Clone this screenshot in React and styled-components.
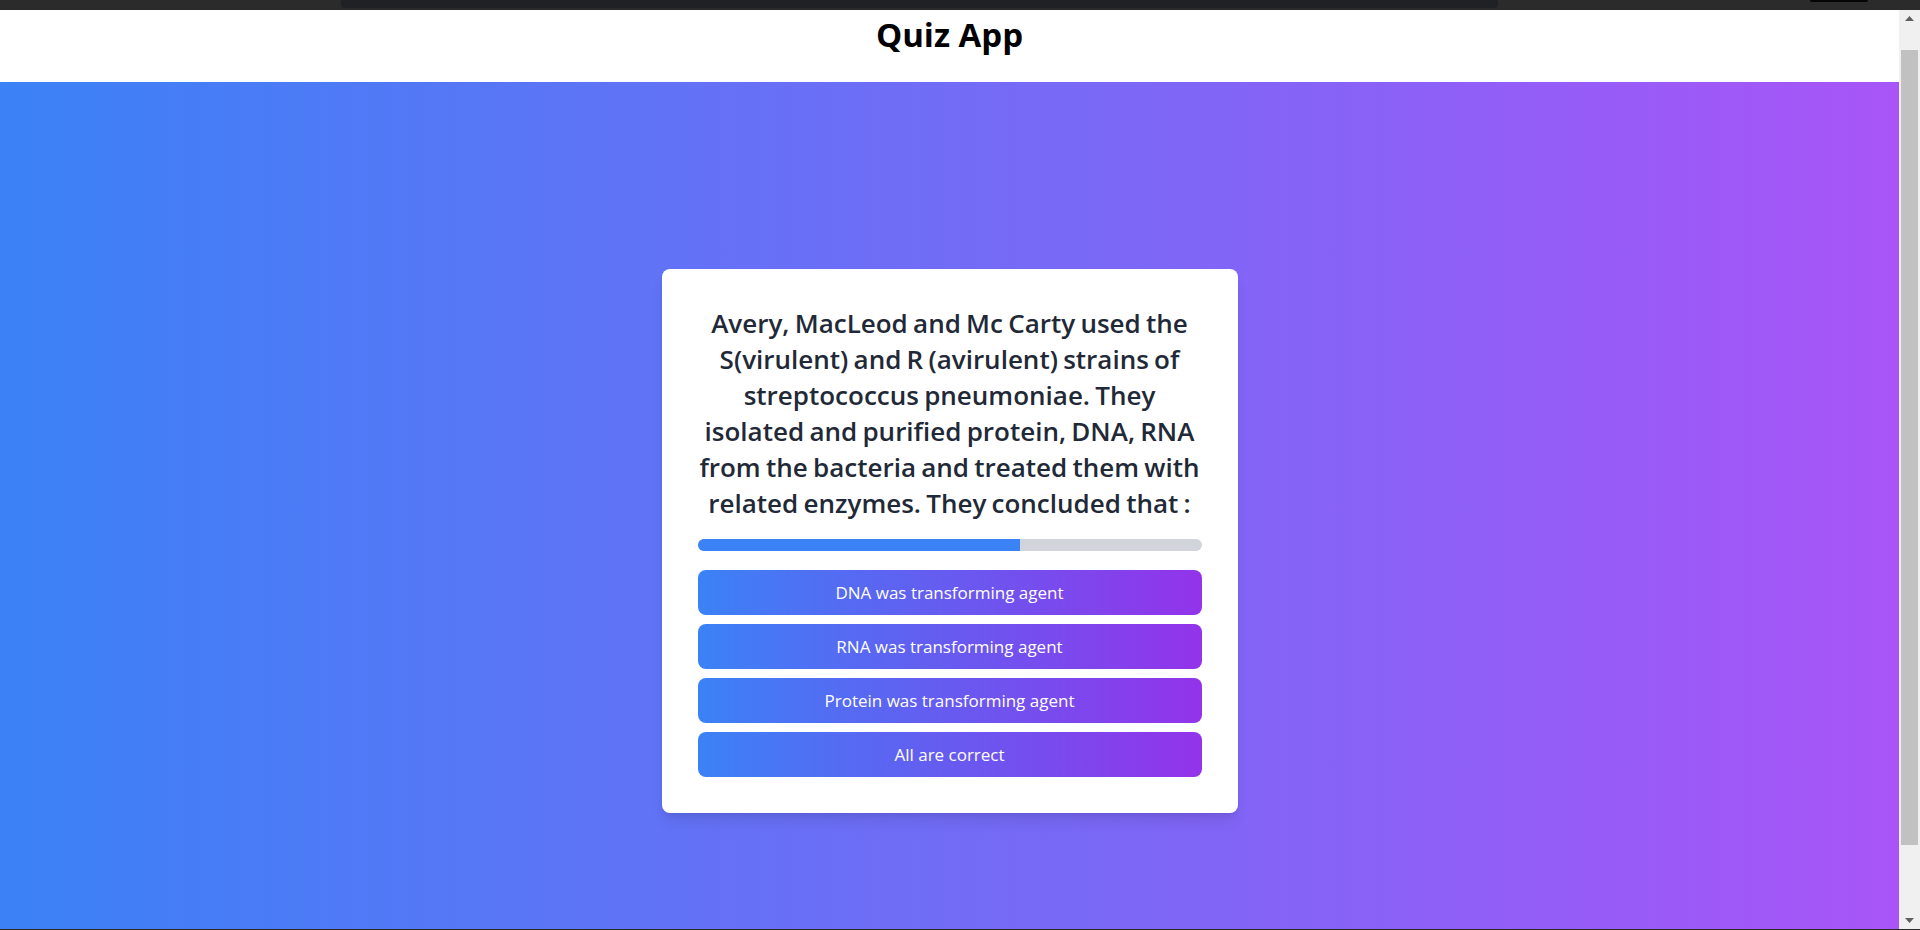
import React from 'react';
import styled, { createGlobalStyle } from 'styled-components';

const GlobalStyle = createGlobalStyle`
    html, body {
        margin: 0;
        padding: 0;
        overflow: hidden;
        font-family: "Open Sans", "Noto Sans", sans-serif;
    }
`;

const Frame = styled.div`
    height: 930px;
    display: flex;
    flex-direction: column;
    background-color: #2a2a2a;
`;

const ChromeBar = styled.div`
    height: 10px;
    flex-shrink: 0;
    display: flex;
    align-items: flex-start;
    padding-left: 341px;
    background-color: #2b2b2b;
`;

const Omnibox = styled.div`
    width: 1157px;
    height: 8px;
    background-color: #202124;
    border-radius: 0 0 4px 4px;
`;

const ChromePill = styled.div`
    width: 58px;
    height: 2px;
    margin-left: 312px;
    background-color: #050505;
    border-radius: 0 0 6px 6px;
`;

const Viewport = styled.div`
    flex: 1;
    min-height: 0;
    display: flex;
    margin-bottom: 1px;
`;

const Page = styled.div`
    flex: 1;
    overflow: hidden;
    display: flex;
    flex-direction: column;
`;

const Header = styled.header`
    height: 72px;
    flex-shrink: 0;
    box-sizing: border-box;
    padding-top: 5px;
    display: flex;
    justify-content: center;
    background-color: #fff;
`;

const Title = styled.h1`
    margin: 0;
    font-size: 33px;
    line-height: 40px;
    font-weight: 700;
    color: #000;
`;

const Main = styled.main`
    height: 920px;
    flex-shrink: 0;
    box-sizing: border-box;
    padding-bottom: 2px;
    display: flex;
    align-items: center;
    justify-content: center;
    background: linear-gradient(to right, #3b82f6, #a855f7);
`;

const Card = styled.div`
    width: 576px;
    box-sizing: border-box;
    padding: 36px;
    background-color: #fff;
    border-radius: 8px;
    box-shadow: 0 10px 15px -3px rgba(0, 0, 0, 0.1), 0 4px 6px -4px rgba(0, 0, 0, 0.1);
`;

const Question = styled.h2`
    margin: 0 0 18px;
    font-size: 26px;
    line-height: 36px;
    font-weight: 600;
    word-spacing: -1.5px;
    text-align: center;
    color: #1f2937;
`;

const Track = styled.div`
    height: 12px;
    margin-bottom: 19px;
    border-radius: 9999px;
    background-color: #d1d5db;
    overflow: hidden;
`;

const Fill = styled.div`
    height: 100%;
    background-color: #3b82f6;
`;

const Options = styled.div`
    display: flex;
    flex-direction: column;
    gap: 9px;
`;

const OptionBtn = styled.button`
    height: 45px;
    border: none;
    border-radius: 8px;
    padding: 0 16px;
    font-family: "Open Sans", "Noto Sans", sans-serif;
    font-size: 17px;
    line-height: 45px;
    color: #fff;
    cursor: pointer;
    background: linear-gradient(to right, #3b82f6, #9333ea);
`;

const Scrollbar = styled.div`
    width: 21px;
    flex-shrink: 0;
    display: flex;
    flex-direction: column;
    background-color: #f0f0f0;
`;

const Arrow = styled.div`
    height: 17px;
    flex-shrink: 0;
    display: flex;
    align-items: center;
    justify-content: center;
`;

const ThumbTrack = styled.div`
    flex: 1;
    padding: 23px 2px 0;
`;

const Thumb = styled.div`
    height: 795px;
    background-color: #c1c1c1;
`;

const question =
    'Avery, MacLeod and Mc Carty used the S(virulent) and R (avirulent) strains of streptococcus pneumoniae. They isolated and purified protein, DNA, RNA from the bacteria and treated them with related enzymes. They concluded that :';

const options = [
    'DNA was transforming agent',
    'RNA was transforming agent',
    'Protein was transforming agent',
    'All are correct',
];

const progress = 64;

export default function App() {
    return (
        <>
            <GlobalStyle />
            <Frame>
                <ChromeBar>
                    <Omnibox />
                    <ChromePill />
                </ChromeBar>
                <Viewport>
                    <Page>
                        <Header>
                            <Title>Quiz App</Title>
                        </Header>
                        <Main>
                            <Card>
                                <Question>{question}</Question>
                                <Track>
                                    <Fill style={{ width: `${progress}%` }} />
                                </Track>
                                <Options>
                                    {options.map(opt => (
                                        <OptionBtn key={opt}>{opt}</OptionBtn>
                                    ))}
                                </Options>
                            </Card>
                        </Main>
                    </Page>
                    <Scrollbar>
                        <Arrow>
                            <svg width="9" height="5" viewBox="0 0 9 5">
                                <path d="M0 5 L4.5 0 L9 5 Z" fill="#606060" />
                            </svg>
                        </Arrow>
                        <ThumbTrack>
                            <Thumb />
                        </ThumbTrack>
                        <Arrow>
                            <svg width="9" height="5" viewBox="0 0 9 5">
                                <path d="M0 0 L4.5 5 L9 0 Z" fill="#606060" />
                            </svg>
                        </Arrow>
                    </Scrollbar>
                </Viewport>
            </Frame>
        </>
    );
}
